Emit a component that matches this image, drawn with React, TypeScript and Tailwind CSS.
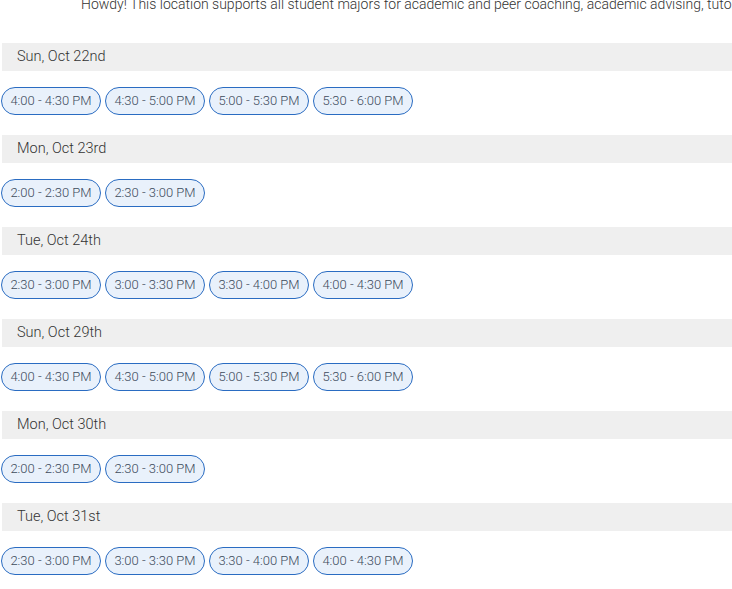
const DAYS = [
  { label: "Sun, Oct 22nd", slots: ["4:00 - 4:30 PM", "4:30 - 5:00 PM", "5:00 - 5:30 PM", "5:30 - 6:00 PM"] },
  { label: "Mon, Oct 23rd", slots: ["2:00 - 2:30 PM", "2:30 - 3:00 PM"] },
  { label: "Tue, Oct 24th", slots: ["2:30 - 3:00 PM", "3:00 - 3:30 PM", "3:30 - 4:00 PM", "4:00 - 4:30 PM"] },
  { label: "Sun, Oct 29th", slots: ["4:00 - 4:30 PM", "4:30 - 5:00 PM", "5:00 - 5:30 PM", "5:30 - 6:00 PM"] },
  { label: "Mon, Oct 30th", slots: ["2:00 - 2:30 PM", "2:30 - 3:00 PM"] },
  { label: "Tue, Oct 31st", slots: ["2:30 - 3:00 PM", "3:00 - 3:30 PM", "3:30 - 4:00 PM", "4:00 - 4:30 PM"] },
];

export default function App() {
  return (
    <div className="w-[732px] h-[589px] overflow-hidden bg-white font-['Roboto',sans-serif] font-light">
      {/* intro text, scrolled partly out of view */}
      <p className="-mt-1.5 mb-[29px] pl-[81px] leading-5 text-[14px] text-[#333] whitespace-nowrap">
        Howdy! This location supports all student majors for academic and peer coaching, academic advising, tutoring and more.
      </p>

      {DAYS.map((day) => (
        <section key={day.label} className="mb-5">
          <div className="ml-0.5 h-7 flex items-center pl-[15px] bg-[#efefef] text-[14.5px] text-[#333]">
            {day.label}
          </div>
          <div className="mt-4 ml-px flex gap-1">
            {day.slots.map((s) => (
              <button
                key={s}
                className="w-[100px] h-7 rounded-full border border-[#2a6cc2] bg-[#e9f1fb] text-[13px] text-[#3d4b5c] flex items-center justify-center"
              >
                {s}
              </button>
            ))}
          </div>
        </section>
      ))}
    </div>
  );
}
